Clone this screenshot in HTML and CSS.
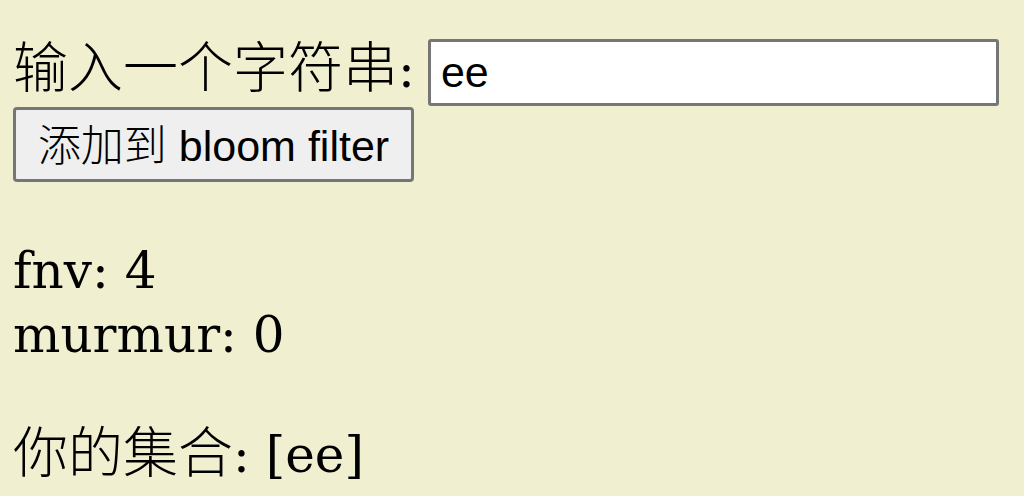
FILE: index.html
```html
<!DOCTYPE html>
<html lang="zh">
<head>
<meta charset="utf-8">
<title>bloom filter</title>
<link rel="stylesheet" href="styles.css">
</head>
<body>
<div class="input-row">
  <label class="label" for="str"><span class="cjk">输入一个字符串</span>:</label>
  <input class="text-input" id="str" type="text" value="ee">
</div>
<button class="add-btn" type="button"><span class="btn-cjk">添加到</span> bloom filter</button>
<div class="result">
  <div class="line">fnv: 4</div>
  <div class="line">murmur: 0</div>
</div>
<div class="set"><span class="cjk">你的集合</span>: [ee]</div>
</body>
</html>
```

FILE: styles.css
```css
html {
  background: #f0f0d0;
}
body {
  margin: 0;
  padding: 0 13px;
  background: #f0f0d0;
  color: #000;
  font-family: "DejaVu Serif", "Noto Sans CJK SC", serif;
  font-size: 50px;
  line-height: 64px;
}
.cjk {
  font-family: "Noto Sans CJK SC", sans-serif;
  font-size: 55px;
  font-weight: 300;
  line-height: 40px;
}
.input-row {
  display: flex;
  align-items: baseline;
  margin-top: 39px;
}
.label {
  line-height: 50px;
  white-space: nowrap;
}
.text-input {
  box-sizing: border-box;
  margin-left: 13px;
  width: 571px;
  height: 67px;
  padding: 0 10px;
  border: 3px solid #767676;
  border-radius: 3px;
  background: #fff;
  color: #000;
  font-family: "Liberation Sans", "Noto Sans CJK SC", sans-serif;
  font-size: 43px;
  outline: none;
}
.add-btn {
  display: block;
  box-sizing: border-box;
  margin: 1px 0 0;
  width: 401px;
  height: 75px;
  padding: 0;
  border: 3px solid #767676;
  border-radius: 4px;
  background: #efefef;
  color: #000;
  font-family: "Liberation Sans", "Noto Sans CJK SC", sans-serif;
  font-size: 43px;
  line-height: 1;
}
.btn-cjk {
  font-family: "Noto Sans CJK SC", sans-serif;
  font-weight: 300;
}
.result {
  margin-top: 57px;
}
.set {
  margin-top: 56px;
}
```
